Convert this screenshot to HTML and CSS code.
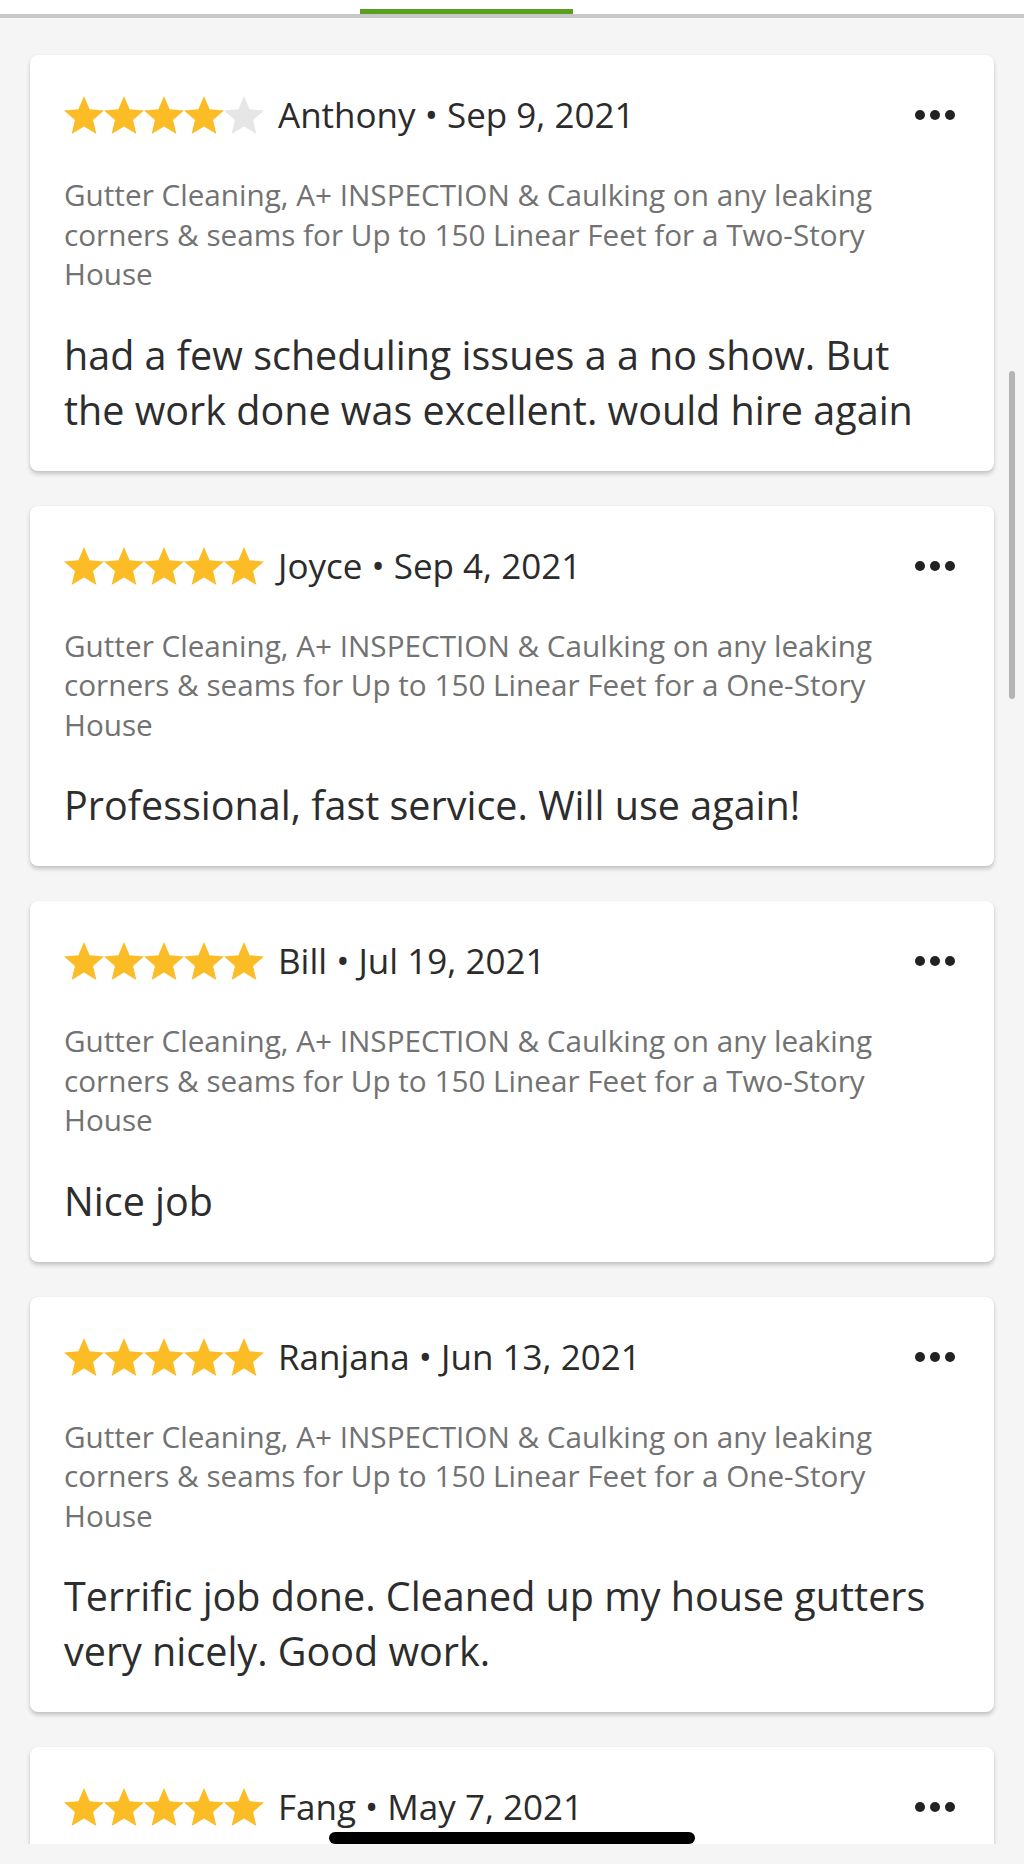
FILE: index.html
```html
<!DOCTYPE html>
<html lang="en">
<head>
<meta charset="utf-8">
<title>Reviews</title>
<link rel="stylesheet" href="styles.css">
</head>
<body>
<div class="screen">
  <header class="tabs"><span class="tab-indicator"></span></header>
  <main class="feed">
    <article class="card">
      <div class="card-head">
        <div class="stars">
          <svg class="star on" viewBox="2 2 20 19"><path d="M12 17.27L18.18 21l-1.64-7.03L22 9.24l-7.19-.61L12 2 9.19 8.63 2 9.24l5.46 4.73L5.82 21z"/></svg>
          <svg class="star on" viewBox="2 2 20 19"><path d="M12 17.27L18.18 21l-1.64-7.03L22 9.24l-7.19-.61L12 2 9.19 8.63 2 9.24l5.46 4.73L5.82 21z"/></svg>
          <svg class="star on" viewBox="2 2 20 19"><path d="M12 17.27L18.18 21l-1.64-7.03L22 9.24l-7.19-.61L12 2 9.19 8.63 2 9.24l5.46 4.73L5.82 21z"/></svg>
          <svg class="star on" viewBox="2 2 20 19"><path d="M12 17.27L18.18 21l-1.64-7.03L22 9.24l-7.19-.61L12 2 9.19 8.63 2 9.24l5.46 4.73L5.82 21z"/></svg>
          <svg class="star off" viewBox="2 2 20 19"><path d="M12 17.27L18.18 21l-1.64-7.03L22 9.24l-7.19-.61L12 2 9.19 8.63 2 9.24l5.46 4.73L5.82 21z"/></svg>
        </div>
        <span class="name">Anthony • Sep 9, 2021</span>
        <span class="more"><i></i><i></i><i></i></span>
      </div>
      <p class="service">Gutter Cleaning, A+ INSPECTION &amp; Caulking on any leaking corners &amp; seams for Up to 150 Linear Feet for a Two-Story House</p>
      <p class="review">had a few scheduling issues a a no show. But the work done was excellent. would hire again</p>
    </article>

    <article class="card">
      <div class="card-head">
        <div class="stars">
          <svg class="star on" viewBox="2 2 20 19"><path d="M12 17.27L18.18 21l-1.64-7.03L22 9.24l-7.19-.61L12 2 9.19 8.63 2 9.24l5.46 4.73L5.82 21z"/></svg>
          <svg class="star on" viewBox="2 2 20 19"><path d="M12 17.27L18.18 21l-1.64-7.03L22 9.24l-7.19-.61L12 2 9.19 8.63 2 9.24l5.46 4.73L5.82 21z"/></svg>
          <svg class="star on" viewBox="2 2 20 19"><path d="M12 17.27L18.18 21l-1.64-7.03L22 9.24l-7.19-.61L12 2 9.19 8.63 2 9.24l5.46 4.73L5.82 21z"/></svg>
          <svg class="star on" viewBox="2 2 20 19"><path d="M12 17.27L18.18 21l-1.64-7.03L22 9.24l-7.19-.61L12 2 9.19 8.63 2 9.24l5.46 4.73L5.82 21z"/></svg>
          <svg class="star on" viewBox="2 2 20 19"><path d="M12 17.27L18.18 21l-1.64-7.03L22 9.24l-7.19-.61L12 2 9.19 8.63 2 9.24l5.46 4.73L5.82 21z"/></svg>
        </div>
        <span class="name">Joyce • Sep 4, 2021</span>
        <span class="more"><i></i><i></i><i></i></span>
      </div>
      <p class="service">Gutter Cleaning, A+ INSPECTION &amp; Caulking on any leaking corners &amp; seams for Up to 150 Linear Feet for a One-Story House</p>
      <p class="review">Professional, fast service. Will use again!</p>
    </article>

    <article class="card">
      <div class="card-head">
        <div class="stars">
          <svg class="star on" viewBox="2 2 20 19"><path d="M12 17.27L18.18 21l-1.64-7.03L22 9.24l-7.19-.61L12 2 9.19 8.63 2 9.24l5.46 4.73L5.82 21z"/></svg>
          <svg class="star on" viewBox="2 2 20 19"><path d="M12 17.27L18.18 21l-1.64-7.03L22 9.24l-7.19-.61L12 2 9.19 8.63 2 9.24l5.46 4.73L5.82 21z"/></svg>
          <svg class="star on" viewBox="2 2 20 19"><path d="M12 17.27L18.18 21l-1.64-7.03L22 9.24l-7.19-.61L12 2 9.19 8.63 2 9.24l5.46 4.73L5.82 21z"/></svg>
          <svg class="star on" viewBox="2 2 20 19"><path d="M12 17.27L18.18 21l-1.64-7.03L22 9.24l-7.19-.61L12 2 9.19 8.63 2 9.24l5.46 4.73L5.82 21z"/></svg>
          <svg class="star on" viewBox="2 2 20 19"><path d="M12 17.27L18.18 21l-1.64-7.03L22 9.24l-7.19-.61L12 2 9.19 8.63 2 9.24l5.46 4.73L5.82 21z"/></svg>
        </div>
        <span class="name">Bill • Jul 19, 2021</span>
        <span class="more"><i></i><i></i><i></i></span>
      </div>
      <p class="service">Gutter Cleaning, A+ INSPECTION &amp; Caulking on any leaking corners &amp; seams for Up to 150 Linear Feet for a Two-Story House</p>
      <p class="review">Nice job</p>
    </article>

    <article class="card">
      <div class="card-head">
        <div class="stars">
          <svg class="star on" viewBox="2 2 20 19"><path d="M12 17.27L18.18 21l-1.64-7.03L22 9.24l-7.19-.61L12 2 9.19 8.63 2 9.24l5.46 4.73L5.82 21z"/></svg>
          <svg class="star on" viewBox="2 2 20 19"><path d="M12 17.27L18.18 21l-1.64-7.03L22 9.24l-7.19-.61L12 2 9.19 8.63 2 9.24l5.46 4.73L5.82 21z"/></svg>
          <svg class="star on" viewBox="2 2 20 19"><path d="M12 17.27L18.18 21l-1.64-7.03L22 9.24l-7.19-.61L12 2 9.19 8.63 2 9.24l5.46 4.73L5.82 21z"/></svg>
          <svg class="star on" viewBox="2 2 20 19"><path d="M12 17.27L18.18 21l-1.64-7.03L22 9.24l-7.19-.61L12 2 9.19 8.63 2 9.24l5.46 4.73L5.82 21z"/></svg>
          <svg class="star on" viewBox="2 2 20 19"><path d="M12 17.27L18.18 21l-1.64-7.03L22 9.24l-7.19-.61L12 2 9.19 8.63 2 9.24l5.46 4.73L5.82 21z"/></svg>
        </div>
        <span class="name">Ranjana • Jun 13, 2021</span>
        <span class="more"><i></i><i></i><i></i></span>
      </div>
      <p class="service">Gutter Cleaning, A+ INSPECTION &amp; Caulking on any leaking corners &amp; seams for Up to 150 Linear Feet for a One-Story House</p>
      <p class="review">Terrific job done. Cleaned up my house gutters very nicely. Good work.</p>
    </article>

    <article class="card">
      <div class="card-head">
        <div class="stars">
          <svg class="star on" viewBox="2 2 20 19"><path d="M12 17.27L18.18 21l-1.64-7.03L22 9.24l-7.19-.61L12 2 9.19 8.63 2 9.24l5.46 4.73L5.82 21z"/></svg>
          <svg class="star on" viewBox="2 2 20 19"><path d="M12 17.27L18.18 21l-1.64-7.03L22 9.24l-7.19-.61L12 2 9.19 8.63 2 9.24l5.46 4.73L5.82 21z"/></svg>
          <svg class="star on" viewBox="2 2 20 19"><path d="M12 17.27L18.18 21l-1.64-7.03L22 9.24l-7.19-.61L12 2 9.19 8.63 2 9.24l5.46 4.73L5.82 21z"/></svg>
          <svg class="star on" viewBox="2 2 20 19"><path d="M12 17.27L18.18 21l-1.64-7.03L22 9.24l-7.19-.61L12 2 9.19 8.63 2 9.24l5.46 4.73L5.82 21z"/></svg>
          <svg class="star on" viewBox="2 2 20 19"><path d="M12 17.27L18.18 21l-1.64-7.03L22 9.24l-7.19-.61L12 2 9.19 8.63 2 9.24l5.46 4.73L5.82 21z"/></svg>
        </div>
        <span class="name">Fang • May 7, 2021</span>
        <span class="more"><i></i><i></i><i></i></span>
      </div>
    </article>
  </main>
  <div class="scrollbar"></div>
  <div class="home-bar"></div>
</div>
</body>
</html>
```

FILE: styles.css
```css
html, body {
  margin: 0;
  padding: 0;
  background: #f5f5f5;
}

.screen {
  position: relative;
  width: 1024px;
  height: 1864px;
  overflow: hidden;
  background: #f5f5f5;
  font-family: "Open Sans", "Noto Sans", "Liberation Sans", sans-serif;
}

.tabs {
  position: relative;
  height: 14px;
  background: #ffffff;
  border-bottom: 4px solid #c9c9c9;
}

.tab-indicator {
  position: absolute;
  left: 360px;
  bottom: 0;
  width: 213px;
  height: 5px;
  background: #5b9f20;
}

.feed {
  box-sizing: border-box;
  height: 1826px;
  overflow: hidden;
  padding: 37px 30px 0;
  display: flex;
  flex-direction: column;
  gap: 35px;
}

.card {
  flex: none;
  background: #ffffff;
  border-radius: 8px;
  box-shadow: 0 3px 4px rgba(0, 0, 0, 0.2), 0 0 2px rgba(0, 0, 0, 0.06);
  padding: 40px 39px 33px 34px;
}

.card-head {
  display: flex;
  align-items: center;
  height: 40px;
}

.stars {
  display: flex;
}

.star {
  display: block;
  width: 40px;
  height: 38px;
}

.star.on { fill: #fcbc26; }
.star.off { fill: #e6e6e6; }

.name {
  margin-left: 14px;
  font-size: 35px;
  line-height: 40px;
  color: #2b2b2b;
  white-space: nowrap;
}

.more {
  margin-left: auto;
  display: flex;
  gap: 5px;
}

.more i {
  display: block;
  width: 10px;
  height: 10px;
  border-radius: 50%;
  background: #222222;
}

.service {
  margin: 40px 0 0;
  max-width: 876px;
  font-size: 29.7px;
  line-height: 39.5px;
  color: #727272;
}

.review {
  margin: 34px 0 0;
  max-width: 876px;
  font-size: 39.5px;
  line-height: 55px;
  color: #2d2d2d;
}

.scrollbar {
  position: absolute;
  left: 1009px;
  top: 371px;
  width: 6px;
  height: 328px;
  border-radius: 3px;
  background: #b4b4b4;
}

.home-bar {
  position: absolute;
  left: 329px;
  top: 1832px;
  width: 366px;
  height: 12px;
  border-radius: 6px;
  background: #000000;
}
```
